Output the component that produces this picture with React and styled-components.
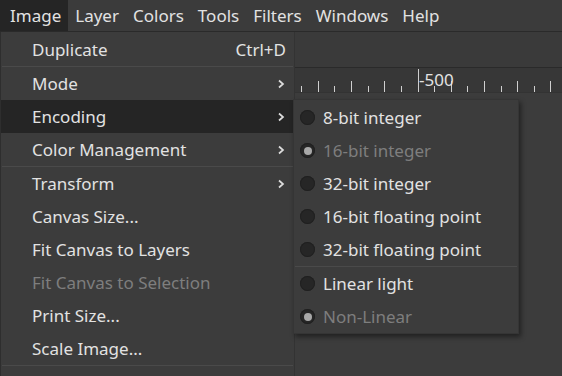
import styled, { createGlobalStyle } from 'styled-components';

const Global = createGlobalStyle`
  html, body {
    margin: 0;
    padding: 0;
    background: #3c3c3c;
    overflow: hidden;
  }
  body {
    font-family: 'Noto Sans', 'Open Sans', sans-serif;
    font-size: 17px;
    color: #e2e2e2;
  }
`;

const Screen = styled.div`
  position: relative;
  width: 562px;
  height: 376px;
  display: flex;
  flex-direction: column;
  overflow: hidden;
  background: #3c3c3c;
`;

const MenuBar = styled.div`
  height: 31px;
  display: flex;
  align-items: stretch;
  background: #3b3b3b;
  border-bottom: 1px solid #2a2a2a;
`;

const BarItem = styled.div`
  display: flex;
  align-items: center;
  padding: 0 7px 0 ${(p) => (p.$first ? '10px' : '7px')};
  background: ${(p) => (p.$open ? '#252525' : 'transparent')};
  line-height: 1;
`;

const ToolStrip = styled.div`
  height: 35px;
  background: #3a3a3a;
  border-bottom: 1px solid #2a2a2a;
`;

const Ruler = styled.div`
  position: relative;
  height: 24px;
  background: #373737;
  border-bottom: 1px solid #333;
`;

const RulerLabel = styled.span`
  position: absolute;
  left: 419px;
  top: 0;
  font-size: 17px;
  line-height: 24px;
  color: #e2e2e2;
`;

const Canvas = styled.div`
  flex: 1;
  background: #3c3c3c;
`;

const Dropdown = styled.div`
  position: absolute;
  top: 32px;
  left: 0;
  width: 293px;
  padding-top: 1px;
  background: #3c3c3c;
  border-left: 1px solid #2e2e2e;
  border-right: 1px solid #333;
`;

const Submenu = styled.div`
  position: absolute;
  top: 99px;
  left: 293px;
  width: 224px;
  padding-top: 1px;
  background: #3c3c3c;
  border: 1px solid #353535;
  box-shadow: 2px 3px 5px rgba(0, 0, 0, 0.45);
`;

const Item = styled.div`
  height: 33px;
  display: flex;
  align-items: center;
  justify-content: space-between;
  padding: 0 8px 0 ${(p) => (p.$indent ? p.$indent : '31px')};
  box-sizing: border-box;
  background: ${(p) => (p.$active ? '#252525' : 'transparent')};
  color: ${(p) => (p.$disabled ? '#7e7e7e' : '#e2e2e2')};
  white-space: nowrap;
`;

const Label = styled.span`
  display: flex;
  align-items: center;
  gap: 8px;
`;

const Shortcut = styled.span`
  color: #e2e2e2;
`;

const Separator = styled.div`
  height: 1px;
  background: #4a4a4a;
  margin: 0 1px;
`;

const Radio = styled.span`
  position: relative;
  width: 15px;
  height: 15px;
  border-radius: 50%;
  background: #262626;
  box-shadow: inset 0 0 0 1px #202020;
  flex: none;

  &::after {
    content: '';
    display: ${(p) => (p.$checked ? 'block' : 'none')};
    position: absolute;
    left: 3.5px;
    top: 3.5px;
    width: 8px;
    height: 8px;
    border-radius: 50%;
    background: #a8a8a8;
  }
`;

const Chevron = () => (
  <svg width="8" height="10" viewBox="0 0 8 10" style={{ marginRight: 1 }}>
    <polyline points="2,1.5 6,5 2,8.5" fill="none" stroke="#dcdcdc" strokeWidth="1.7" />
  </svg>
);

const RulerTicks = () => {
  const step = 16.62;
  const origin = 417.5;
  const ticks = [];
  for (let i = -26; i <= 9; i++) {
    const x = origin + i * step;
    if (x < 0 || x > 562) continue;
    let y1 = 18;
    if (i === 0) y1 = 1;
    else if (i % 2 === 0) y1 = 13;
    ticks.push(<line key={i} x1={Math.round(x) + 0.5} x2={Math.round(x) + 0.5} y1={y1} y2={24} stroke="#cfcfcf" strokeWidth="1" />);
  }
  return (
    <svg width="562" height="24" viewBox="0 0 562 24" style={{ display: 'block' }}>
      {ticks}
    </svg>
  );
};

const barItems = ['Image', 'Layer', 'Colors', 'Tools', 'Filters', 'Windows', 'Help'];

const imageMenu = [
  { label: 'Duplicate', shortcut: 'Ctrl+D' },
  'sep',
  { label: 'Mode', sub: true },
  { label: 'Encoding', sub: true, active: true },
  { label: 'Color Management', sub: true },
  'sep',
  { label: 'Transform', sub: true },
  { label: 'Canvas Size...' },
  { label: 'Fit Canvas to Layers' },
  { label: 'Fit Canvas to Selection', disabled: true },
  { label: 'Print Size...' },
  { label: 'Scale Image...' },
  'sep',
  { label: 'Crop to Selection' },
];

const encodingMenu = [
  { label: '8-bit integer' },
  { label: '16-bit integer', checked: true, disabled: true },
  { label: '32-bit integer' },
  { label: '16-bit floating point' },
  { label: '32-bit floating point' },
  'sep',
  { label: 'Linear light' },
  { label: 'Non-Linear', checked: true, disabled: true },
];

const App = () => {
  return (
    <>
      <Global />
      <Screen>
        <MenuBar>
          {barItems.map((name, i) => (
            <BarItem key={name} $first={i === 0} $open={i === 0}>
              {name}
            </BarItem>
          ))}
        </MenuBar>
        <ToolStrip />
        <Ruler>
          <RulerTicks />
          <RulerLabel>-500</RulerLabel>
        </Ruler>
        <Canvas />

        <Dropdown>
          {imageMenu.map((entry, i) =>
            entry === 'sep' ? (
              <Separator key={i} />
            ) : (
              <Item key={entry.label} $active={entry.active} $disabled={entry.disabled}>
                <Label>{entry.label}</Label>
                {entry.shortcut && <Shortcut>{entry.shortcut}</Shortcut>}
                {entry.sub && <Chevron />}
              </Item>
            )
          )}
        </Dropdown>

        <Submenu>
          {encodingMenu.map((entry, i) =>
            entry === 'sep' ? (
              <Separator key={i} />
            ) : (
              <Item key={entry.label} $indent="6px" $disabled={entry.disabled}>
                <Label>
                  <Radio $checked={entry.checked} />
                  {entry.label}
                </Label>
              </Item>
            )
          )}
        </Submenu>
      </Screen>
    </>
  );
};

export default App;
